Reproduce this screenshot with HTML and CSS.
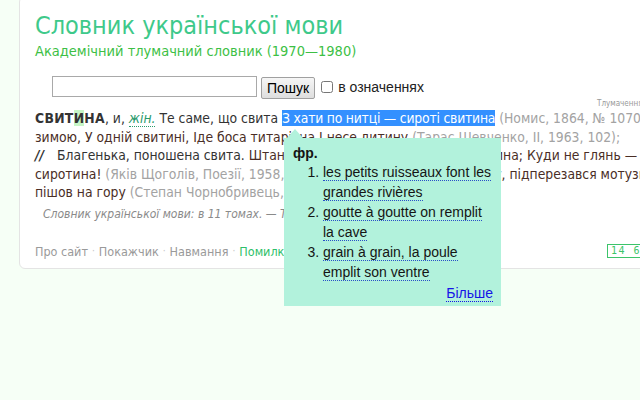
FILE: index.html
```html
<!DOCTYPE html>
<html lang="uk">
<head>
<meta charset="utf-8">
<title>Словник української мови</title>
<link rel="stylesheet" href="styles.css">
</head>
<body>
<div class="card">
  <header class="head">
    <h1 class="title">Словник української мови</h1>
    <div class="subtitle">Академічний тлумачний словник (1970—1980)</div>
  </header>
  <form class="search">
    <input class="q" type="text">
    <button class="btn" type="button">Пошук</button>
    <label class="chk"><input class="box" type="checkbox"><span>в означеннях</span></label>
  </form>
  <div class="meta">Тлумачення, значення слова</div>
  <p class="entry"><span class="line"><b class="hw">СВИТ<span class="stress">И</span>НА</b>, и, <i class="gram">жін.</i> Те саме, що свита <span class="sel">З хати по нитці — сироті свитина</span> <span class="ref">(Номис, 1864, № 10706); </span><span class="quote">Скінчилося зимою,</span></span>
<span class="line"><span class="quote">зимою, У одній свитині, Іде боса титарівна І несе дитину</span> <span class="ref">(Тарас Шевченко, ІІ, 1963, 102);</span></span>
<span class="line"><b class="sense">//</b>Благенька, поношена свита. <span class="quote">Штани латані-перелатані, стара свитина; Куди не глянь — кругом дірки</span></span>
<span class="line"><span class="quote">сиротина!</span> <span class="ref">(Яків Щоголів, Поезії, 1958, 166);</span> <span class="quote">Зняв шапку, надів свитину, підперезався мотузком і</span></span>
<span class="line"><span class="quote">пішов на гору</span> <span class="ref">(Степан Чорнобривець, Потоки.., 1950, 69).</span></span></p>
  <p class="source">Словник української мови: в 11 томах. — Том 9, 1978. — Стор. 127.</p>
  <footer class="foot">
    <nav class="links">
      <span class="lnk">Про сайт</span><span class="dot">·</span><span class="lnk">Покажчик</span><span class="dot">·</span><span class="lnk">Навмання</span><span class="dot">·</span><span class="lnk err">Помилка?</span>
    </nav>
    <span class="counter">14 65</span>
  </footer>
</div>
<div class="popup">
  <div class="lang">фр.</div>
  <ol class="trans">
    <li><span class="tr">les petits ruisseaux font les grandes rivières</span></li>
    <li><span class="tr">goutte à goutte on remplit la cave</span></li>
    <li><span class="tr">grain à grain, la poule emplit son ventre</span></li>
  </ol>
  <div class="more"><span class="more-link">Більше</span></div>
</div>
</body>
</html>
```
FILE: styles.css
```css
html, body {
  margin: 0;
  padding: 0;
}
body {
  background: #f6fff6;
  overflow: hidden;
  width: 640px;
  height: 400px;
  position: relative;
  font-family: "DejaVu Sans Condensed", "DejaVu Sans", sans-serif;
  font-stretch: condensed;
}
.card {
  box-sizing: border-box;
  width: 720px;
  margin: -4px 0 0 19px;
  padding: 14px 0 7px 15px;
  background: #fff;
  border: 1px solid #e4e4e4;
  border-radius: 6px;
}
.title {
  margin: 0;
  font-size: 25px;
  line-height: 30px;
  font-weight: normal;
  color: #3ec98a;
}
.subtitle {
  font-size: 14.5px;
  line-height: 20px;
  color: #3dbf45;
}
.search {
  display: flex;
  align-items: flex-start;
  gap: 4px;
  margin: 15px 0 0 17px;
  font-family: "Liberation Sans", Arial, sans-serif;
  font-stretch: normal;
  font-size: 14px;
}
.q {
  box-sizing: border-box;
  width: 205px;
  height: 21px;
  margin: 0;
  border: 1px solid #a9a9a9;
  background: #fff;
}
.btn {
  box-sizing: border-box;
  height: 22px;
  margin: 1px 0 0;
  padding: 0 5px;
  font-family: inherit;
  font-size: 14px;
  color: #000;
  background: linear-gradient(#f6f6f6, #dedede);
  border: 1px solid #a0a0a0;
  border-radius: 2px;
}
.chk {
  display: flex;
  align-items: center;
  gap: 5px;
  margin-left: 2px;
  height: 22px;
  color: #222;
}
.box {
  margin: 0;
  width: 12px;
  height: 12px;
}
.meta {
  margin: 0 0 0 562px;
  font-size: 8px;
  line-height: 10px;
  color: #999;
  white-space: nowrap;
}
.entry {
  margin: 0;
  font-size: 13.8px;
  line-height: 18.5px;
  color: #333;
  white-space: nowrap;
}
.line {
  display: block;
}
.hw {
  color: #333;
  letter-spacing: 0.3px;
}
.stress {
  background: #c6f5c6;
}
.gram {
  color: #2a9a6c;
  border-bottom: 1px dotted #2a9a6c;
}
.sel {
  background: #3390ff;
  color: #fff;
  letter-spacing: -0.2px;
}
.ref {
  color: #a3a3a3;
}
.quote {
  color: #4a2e26;
}
.sense {
  font-style: italic;
  color: #333;
  margin-right: 13px;
}
.source {
  margin: 4px 0 0 8px;
  font-size: 12px;
  line-height: 16px;
  font-style: italic;
  color: #8a8a8a;
  white-space: nowrap;
}
.foot {
  display: flex;
  align-items: center;
  width: 612px;
  margin-top: 20px;
}
.links {
  font-size: 12.5px;
  line-height: 18px;
  color: #9a9a9a;
}
.dot {
  color: #c4c4c4;
  font-size: 10px;
  padding: 0 4px;
  vertical-align: 2px;
}
.err {
  color: #2fbf6a;
}
.counter {
  box-sizing: border-box;
  margin-left: auto;
  height: 14px;
  width: 40px;
  padding: 0 3px;
  border: 1px solid #3cc46a;
  color: #3cc46a;
  font-family: "DejaVu Sans Mono", monospace;
  font-stretch: normal;
  font-size: 10px;
  line-height: 12px;
  letter-spacing: 1.5px;
  white-space: nowrap;
}
.popup {
  position: absolute;
  left: 284px;
  top: 138px;
  box-sizing: border-box;
  width: 217px;
  height: 168px;
  padding: 6px 8px 0 9px;
  background: #b2f2dc;
  font-family: "Liberation Sans", Arial, sans-serif;
  font-stretch: normal;
  font-size: 14px;
  line-height: 20px;
  color: #151515;
}
.popup::before {
  content: "";
  position: absolute;
  left: 3px;
  top: -9px;
  border-left: 8px solid transparent;
  border-right: 8px solid transparent;
  border-bottom: 9px solid #b2f2dc;
}
.lang {
  font-weight: bold;
  line-height: 18px;
}
.trans {
  margin: 0;
  padding-left: 30px;
}
.tr {
  border-bottom: 1px dotted #2850c8;
}
.more {
  text-align: right;
  margin-top: 1px;
}
.more-link {
  color: #1515e6;
  border-bottom: 1px dotted #1515e6;
}
```
